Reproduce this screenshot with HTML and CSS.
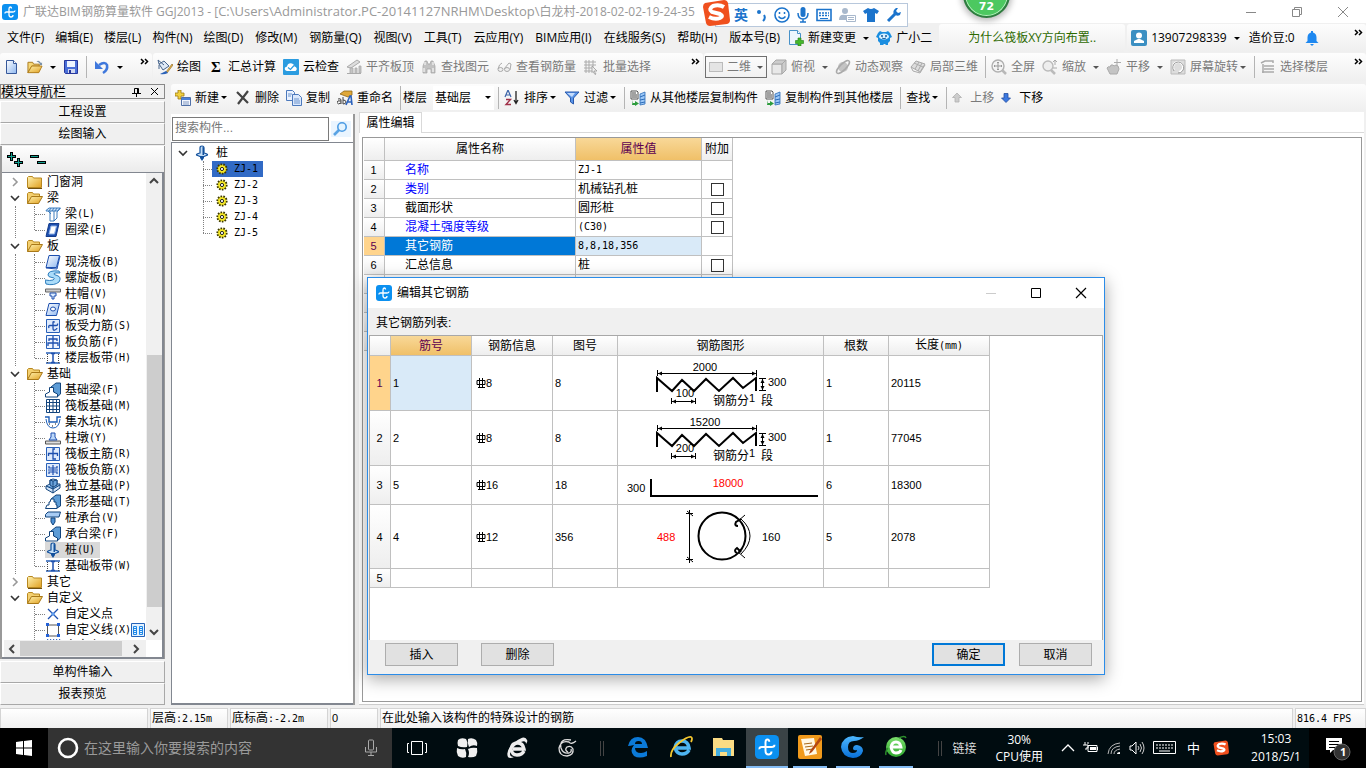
FILE: index.html
```html
<!DOCTYPE html>
<html lang="zh-CN">
<head>
<meta charset="utf-8">
<title>广联达BIM钢筋算量软件 GGJ2013</title>
<link rel="stylesheet" href="styles.css">
</head>
<body>
<svg class="defs" aria-hidden="true">
  <defs>
    <linearGradient id="gold" x1="0" y1="0" x2="1" y2="1"><stop offset="0" stop-color="#fff2b0"/><stop offset="1" stop-color="#e0a020"/></linearGradient>
    <linearGradient id="blue" x1="0" y1="0" x2="1" y2="1"><stop offset="0" stop-color="#fff"/><stop offset="1" stop-color="#8fb8f0"/></linearGradient>
    <linearGradient id="deep" x1="0" y1="0" x2="0" y2="1"><stop offset="0" stop-color="#4db8ff"/><stop offset="1" stop-color="#0870d8"/></linearGradient>
    <linearGradient id="green" x1="0" y1="0" x2="0" y2="1"><stop offset="0" stop-color="#7be06c"/><stop offset="1" stop-color="#2fa82f"/></linearGradient>
  </defs>
  <symbol id="i-app" viewBox="0 0 16 16"><rect width="16" height="16" rx="3" fill="#0b90f0"/><path d="M9.500 4.500Q9.500 3 8.300 3 7 3 7 5v5.500Q7 13 9 13t2-2M3 9.500Q2.800 8 4.500 8h6.500Q13 8 13 6.500" fill="none" stroke="#fff" stroke-width="1.300"/></symbol>
  <symbol id="i-new" viewBox="0 0 16 16"><path d="M2.500 1.500h7l3 3v10h-10z" fill="url(#blue)" stroke="#36589a"/><path d="M9.500 1.500v3h3" fill="#fff" stroke="#36589a"/></symbol>
  <symbol id="i-open" viewBox="0 0 17 16"><path d="M1 14V3h5l1 2h6v2H5z" fill="#f6d878" stroke="#a8781c"/><path d="M1 14 5 7h11l-3.500 7z" fill="url(#gold)" stroke="#b07c18"/><path d="M10 2q3-2 5 2l1-1v3h-3l1-1q-1-2-4-3" fill="#7890a8"/></symbol>
  <symbol id="i-save" viewBox="0 0 16 16"><path d="M1.500 1.500h13v13h-12l-1-1z" fill="#4a6fd8" stroke="#27379c"/><path d="M4 2h8v6H4z" fill="#eef4ff"/><path d="M5 10h7v4H5z" fill="#d0d8f0"/><path d="M6 11h2v3H6z" fill="#27379c"/></symbol>
  <symbol id="i-undo" viewBox="0 0 16 16"><path d="M5 6q6-4 8 0 1 5-4 8" fill="none" stroke="#3f78dc" stroke-width="2.600"/><path d="M1 2v8h8z" fill="#3f78dc"/></symbol>
  <symbol id="i-paint" viewBox="0 0 16 16"><path d="m2 5 5-3 5 5-6 4z" fill="#dfe9f6" stroke="#46648c"/><path d="M2 5 1 1l6 5M2 6v4" fill="none" stroke="#46648c"/><path d="m15 5-6 8 1 1 6-8z" fill="#efb844" stroke="#7c5c20" stroke-width=".6"/><path d="m9 12-6 3q4 1 8-1z" fill="#2b62b8"/></symbol>
  <symbol id="i-cloud" viewBox="0 0 16 16"><rect width="16" height="16" rx="1" fill="#2b9ce0"/><path d="M4 12q-3-1-2-3.500l2-1q1-4 5-3 2 .5 2.500 3 3 1 2 3.500l-1 1z" fill="#fff"/><path d="m5 8.500 2.500 2 3.500-4" fill="none" stroke="#2b9ce0" stroke-width="1.200"/></symbol>
  <symbol id="i-slab" viewBox="0 0 16 16"><path d="m1 8 10-7 3 2-9 6z" fill="#ddd" stroke="#aaa"/><path d="M4 14V9h3v5m2 0V9h2v5m2 0V7h2v7z" fill="#c4c4c4" stroke="#aaa" stroke-width=".8"/><path d="M1 14.500h14" stroke="#aaa"/></symbol>
  <symbol id="i-bino" viewBox="0 0 16 16"><path d="M2 7 4 2h2l1 3h2l1-3h2l2 5v7h-4v-4H6v4H2z" fill="#c2c2c2" stroke="#a0a0a0" stroke-width=".7"/><path d="M4 3v3m8-3v3M3 9v4m9-4v4" stroke="#fff"/></symbol>
  <symbol id="i-glasses" viewBox="0 0 16 16"><path d="M2 10q1-5 4-6M8 10l5-6 2 1-1 6" fill="none" stroke="#aaa"/><ellipse cx="4.500" cy="10.500" rx="2.500" ry="2" fill="#eee" stroke="#aaa"/><ellipse cx="11" cy="10.500" rx="2.500" ry="2" fill="#eee" stroke="#aaa"/></symbol>
  <symbol id="i-batch" viewBox="0 0 16 16"><path d="M1 3h12M1 6h12M1 9h8M1 12h8M3 1v13M6 1v13M10 1v7" stroke="#ababab" fill="none"/><path d="m9 7 5 5h-3l2 3-1 .5-2-3-1 1z" fill="#eee" stroke="#999" stroke-width=".8"/></symbol>
  <symbol id="i-box" viewBox="0 0 16 16"><path d="M1 5h10v10H1z" fill="#e8e8e8" stroke="#a8a8a8"/><path d="m1 5 4-4h10l-4 4zM11 5l4-4v10l-4 4z" fill="#ccc" stroke="#a8a8a8"/></symbol>
  <symbol id="i-orbit" viewBox="0 0 16 16"><circle cx="8" cy="8" r="5" fill="#c4c4c4"/><ellipse cx="8" cy="8" rx="8.500" ry="3" transform="rotate(-45 8 8)" fill="none" stroke="#aaa" stroke-width="1.500"/></symbol>
  <symbol id="i-part" viewBox="0 0 16 16"><path d="m1 8 5-6 9 3-5 8z" fill="#ddd" stroke="#aaa"/><path d="m1 8 2 4 7 2 5-8M4 4l9 4M9 3 5 10M12 4 8 12" fill="none" stroke="#aaa"/></symbol>
  <symbol id="i-full" viewBox="0 0 16 16"><circle cx="7" cy="7" r="6" fill="#f4f4f4" stroke="#b0b0b0" stroke-width="1.400"/><path d="M7 3v8M3 7h8M6 4l1-1 1 1M6 10l1 1 1-1M4 6 3 7l1 1m6-2 1 1-1 1" fill="none" stroke="#999"/><path d="m11 11 4 4" stroke="#b8b8b8" stroke-width="2.500"/></symbol>
  <symbol id="i-zoom" viewBox="0 0 16 16"><circle cx="6" cy="7" r="5" fill="#eee" stroke="#bbb" stroke-width="1.400"/><path d="m9 11 4 4" stroke="#bbb" stroke-width="2.500"/><path d="M13 1v5m-2-3 2-2 2 2M11 9h4" fill="none" stroke="#aaa"/></symbol>
  <symbol id="i-pan" viewBox="0 0 16 16"><path d="M1 9q1-2 3-1l1-2h2l1 1 2-1 2 1 1 3-2 5H4z" fill="#c4c4c4" stroke="#aaa"/><path d="M11 0v7M8 3.500h7" stroke="#aaa"/></symbol>
  <symbol id="i-rotate" viewBox="0 0 16 16"><path d="M1 1h14v14H1z" fill="#ddd" stroke="#bbb"/><path d="M4 11a5 5 0 1 1 5 2" fill="none" stroke="#fff" stroke-width="2"/><path d="M4 12a5.500 5.500 0 1 1 4 2" fill="none" stroke="#999"/></symbol>
  <symbol id="i-layers" viewBox="0 0 16 16"><path d="m1 4 4-2h8v2M4 7h10M4 10h10M2 13h12M3 5v9" stroke="#aaa" stroke-width="1.500" fill="none"/></symbol>
  <symbol id="i-change" viewBox="0 0 16 16"><path d="M1.500.5h8l3 3v11h-11z" fill="#eef6fd" stroke="#4791c8"/><path d="M9.500.5v3h3" fill="#fff" stroke="#4791c8"/><path d="M10 8h3v2.500h2.500v3H13V16h-3v-2.500H7.500v-3H10z" fill="#44b82a" stroke="#257d16" stroke-width=".6"/></symbol>
  <symbol id="i-robot" viewBox="0 0 16 16"><path d="m0 7 2-4 2-2 2 1h4l2-1 2 2 2 4-2 1v3l-2 2v2h-2l-1-1H8l-1 1H4v-2l-2-2V8z" fill="#1b8ee0"/><ellipse cx="8" cy="6.500" rx="5" ry="3" fill="#d8f0ff"/><circle cx="6" cy="6" r="1" fill="#155c9c"/><circle cx="10" cy="6" r="1" fill="#155c9c"/><path d="M6 8q2 1.500 4 0" stroke="#155c9c" fill="none"/></symbol>
  <symbol id="i-user" viewBox="0 0 16 16"><rect width="16" height="16" rx="2" fill="#3b8fc2"/><circle cx="8" cy="5.500" r="3" fill="#fff"/><path d="M3 13v-2l4-2h2l4 2v2z" fill="#fff"/></symbol>
  <symbol id="i-bell" viewBox="0 0 16 16"><path d="M7 1h2v1.500q3.500 1 3.500 5V11l2 2h-13l2-2V7.500q0-4 3.500-5z" fill="#1e88f0"/><path d="M6 14h4l-2 2z" fill="#1e88f0"/></symbol>
  <symbol id="i-add" viewBox="0 0 16 16"><path d="M3 0h3v3h3v3H6v3H3V6H0V3h3z" fill="#f0d040" stroke="#9c7a10" stroke-width=".8"/><path d="M6.500 7.500h9v8h-9z" fill="#f2f6ff" stroke="#5070a8"/><path d="M7 8h8v2H7z" fill="#4a80d8"/><path d="M8 12h6M8 14h6" stroke="#8098c0"/></symbol>
  <symbol id="i-del" viewBox="0 0 16 16"><path d="m2 2 11 11m0-12L3 14" stroke="#444" stroke-width="2.200"/></symbol>
  <symbol id="i-copy" viewBox="0 0 16 16"><path d="M.5.500h6l2 2v8h-8z" fill="#eaf2ff" stroke="#4c79bc"/><path d="M6.500 4.500h6l3 3v8h-9z" fill="#dbe8fc" stroke="#4c79bc"/><path d="M2 4h4M2 6h3m3 3h5m-5 2h6m-6 2h6" stroke="#6c94cc"/></symbol>
  <symbol id="i-rename" viewBox="0 0 16 16"><path d="m3 4 4-3h8v4l-4 2z" fill="#e0a838" stroke="#8c6418" stroke-width=".8"/><path d="M1 9q3-1 3 1v4M4 11q-4-1-4 1.500Q1 15 4 13M6 7v7q3 0 3-2t-3-2" fill="none" stroke="#444"/><path d="m9 15 4-9h1l1 9m-5-3h5" fill="none" stroke="#2c62bc" stroke-width="1.600"/></symbol>
  <symbol id="i-sort" viewBox="0 0 16 16"><path d="M1 7 4 0l3 7M2 5h4" fill="none" stroke="#3c64a8" stroke-width="1.200"/><path d="M2 9.500h4.500L2 14.500h5" fill="none" stroke="#a03048" stroke-width="1.400"/><path d="M12 1v12m-2-3 2 3.500 2-3.500" fill="none" stroke="#222" stroke-width="1.300"/></symbol>
  <symbol id="i-filter" viewBox="0 0 16 16"><path d="M1 2h14L9.500 8v6l-3-2V8z" fill="#5a94e8" stroke="#2859ac"/><path d="M3 3h8L8 7z" fill="#c4dcfc"/></symbol>
  <symbol id="i-floor" viewBox="0 0 16 16"><path d="M1 1h6l1 1v7H1z" fill="#fff" stroke="#555"/><path d="M2 3h4M2 5h5M2 7h5" stroke="#444"/><path d="m10 4 5-2v12l-5 1z" fill="#9cc8f8" stroke="#2c6cb8" stroke-width=".8"/><path d="m10 7 5-2m-5 5 5-1m-5 4 5-1" stroke="#2c6cb8"/><path d="M3 10v3h2v-2l4 2.500L5 16v-1H2z" fill="#2c9c3c"/></symbol>
  <symbol id="i-up" viewBox="0 0 10 16"><path d="m5 3 4.500 4.500H7V12H3V7.500H.5z" fill="#ccc" stroke="#b0b0b0" stroke-width=".8"/></symbol>
  <symbol id="i-down" viewBox="0 0 10 16"><path d="M5 12.500.5 8H3V3.500h4V8h2.500z" fill="#3b78e0" stroke="#234ca0" stroke-width=".8"/></symbol>
  <symbol id="i-more" viewBox="0 0 9 8"><path d="m1 1 2.500 2.500L1 6m4-5 2.500 2.500L5 6" fill="none" stroke="#000" stroke-width="1.500"/></symbol>
  <symbol id="i-right" viewBox="0 0 12 12"><path d="m4 2 4 4-4 4" fill="none" stroke="#999" stroke-width="1.600"/></symbol>
  <symbol id="i-exp" viewBox="0 0 12 12"><path d="m2 4 4 4 4-4" fill="none" stroke="#333" stroke-width="1.600"/></symbol>
  <symbol id="f-shut" viewBox="0 0 17 16"><path d="M1.500 13.500v-10l1-1h4l1 1.500h8v9.500z" fill="url(#gold)" stroke="#b88820"/><path d="M2 14.500h14" stroke="#705010"/></symbol>
  <symbol id="f-open" viewBox="0 0 17 16"><path d="M1.500 13.500v-10l1-1h4l1 1.500h6v2.500" fill="#f4d070" stroke="#b88820"/><path d="m1.500 13.500 4-7h11l-4 7z" fill="url(#gold)" stroke="#a87818"/></symbol>
  <symbol id="t-beam" viewBox="0 0 16 16"><path d="M1 4.500 4 2h11.500L13 5H1z" fill="#cfe4fa" stroke="#3c7cbc"/><path d="M5 5v10h4V5M9 15l3-3V6l3-4M3 5l3 3M6 2l-2 3m5-3L7 5m5-3-2 3" fill="none" stroke="#3c7cbc"/></symbol>
  <symbol id="t-ring" viewBox="0 0 16 16"><path d="M4 1.500h10l-3 13H1z" fill="#1d4fae" stroke="#143c8c"/><path d="M6 4h5.500l-2 8H4z" fill="#fff" stroke="#8cb0e8"/></symbol>
  <symbol id="t-slab" viewBox="0 0 16 16"><path d="M4 1.500h10.500l-3 12H1z" fill="url(#blue)" stroke="#1d4fae"/><path d="m1 14 11 1 3-13" stroke="#1d4fae" fill="none"/></symbol>
  <symbol id="t-spiral" viewBox="0 0 16 16"><path d="M14 1Q3 0 3 5q0 2 4 2.500 4 .5 1 2.500-3 1-8 0l1 4q8 2 13-2 3-5-2-6.500-4-1-3-2 1-1 6-.5z" fill="#aadcfa" stroke="#2c7cbc"/></symbol>
  <symbol id="t-cap" viewBox="0 0 16 16"><path d="M.5 3h15v3H.5z" fill="#ccc" stroke="#666"/><path d="M5 7h6v3H9v3H7v-3H5z" fill="#dcecff" stroke="#1d4fae"/></symbol>
  <symbol id="t-hole" viewBox="0 0 16 16"><path d="M4 1.500h10.500l-3 12H1z" fill="url(#blue)" stroke="#1d4fae"/><ellipse cx="8" cy="7" rx="2.500" ry="2" fill="#fff" stroke="#1d4fae"/></symbol>
  <symbol id="t-force" viewBox="0 0 16 16"><path d="M1.500 1.500h13v13h-13z" fill="#dfebfc" stroke="#2860b8"/><path d="M9.500 4.500Q9 3 8 4v6q0 3 2 2t2-2M4 10q-1-2.500 1-2.500h6q2 0 1.500-2" fill="none" stroke="#1d4fae" stroke-width="1.300"/></symbol>
  <symbol id="t-neg" viewBox="0 0 16 16"><path d="M1.500 1.500h13v13h-13z" fill="#eef4fe" stroke="#2860b8"/><path d="M8 2v12M4 7V5h8v2M3 12v-3h10v3" fill="none" stroke="#1d4fae" stroke-width="1.300"/></symbol>
  <symbol id="t-negx" viewBox="0 0 16 16"><path d="M1.500 1.500h13v13h-13z" fill="#dfebfc" stroke="#2860b8"/><path d="M8 3v10M4 4v2h8V4M4 12v-2h8v2M3 8h10" fill="none" stroke="#1d4fae" stroke-width="1.200"/></symbol>
  <symbol id="t-band" viewBox="0 0 16 16"><path d="M1 3h14M1 13h14" stroke="#2860b8" stroke-width="1.500"/><path d="M8 3v10M6 3.500h4M6 12.500h4" stroke="#1d4fae" stroke-width="1.500"/><path d="M2.500 4v9m11-9v9" stroke="#444" stroke-dasharray="1 1"/></symbol>
  <symbol id="t-fbeam" viewBox="0 0 16 16"><path d="m6 5 5-4h4.500v11L12 15z" fill="#5d9cd6" stroke="#12447c"/><path d="M.5 15v-3l4-2V5.500h4V10l4 2v3z" fill="#fff" stroke="#12447c"/></symbol>
  <symbol id="t-raft" viewBox="0 0 16 16"><path d="M1.500 1.500h13v13h-13zM4.500 4.500h7v7h-7zM1 4.500h14M1 11.500h14M4.500 1v14M11.500 1v14M8 1v14M1 8h14" fill="none" stroke="#12447c"/></symbol>
  <symbol id="t-pit" viewBox="0 0 16 16"><path d="M0 3h4v5h8V3h4" fill="none" stroke="#1e5fb8" stroke-width="1.400"/><path d="M1 5q1 9 7 9t7-9" fill="none" stroke="#1e5fb8"/><path d="M4 10h1m2 2h1m2-2h1" stroke="#111"/></symbol>
  <symbol id="t-pier" viewBox="0 0 16 16"><path d="M.5 11h15v3H.5z" fill="#ddd" stroke="#555"/><path d="M6 3h4v4l2 3H4l2-3z" fill="#bcd8fa" stroke="#1d4fae"/></symbol>
  <symbol id="t-main" viewBox="0 0 16 16"><path d="M1.500 1.500h13v13h-13z" fill="#dfebfc" stroke="#2860b8"/><path d="M10 3H8v10h3M3.500 10V7.500h9V10" fill="none" stroke="#1d4fae" stroke-width="1.300"/></symbol>
  <symbol id="t-solo" viewBox="0 0 16 16"><path d="m1 8 4-2V2l3-1 4 1v4l3 0v4l-7 5-7-4z" fill="#cfe2f8" stroke="#12447c"/><path d="M5 7V2l3 1 4-1v5L8 9zM1 8l7 3 7-4M8 3v12" fill="#6ca4dc" stroke="#12447c"/></symbol>
  <symbol id="t-strip" viewBox="0 0 16 16"><path d="m6 5 5-4h4.500v11L12 14z" fill="#5d9cd6" stroke="#12447c"/><path d="M.5 14.500 2 11h2V8h1l1-3h3v3h2v3h1v3.500z" fill="#fff" stroke="#12447c"/></symbol>
  <symbol id="t-pcap" viewBox="0 0 16 16"><path d="M.5 4.500 3 2h12.500L14 7H.5z" fill="#a8ccf4" stroke="#12447c"/><path d="M6 8h4v4l-2 3-2-3z" fill="#4d90d4" stroke="#12447c"/></symbol>
  <symbol id="t-pile" viewBox="0 0 16 16"><path d="M6 3q0-2 2-2t2 2v5q4 1 3.500 2L10 11.500H6L2.500 10Q2 9 6 8z" fill="#c4def6" stroke="#12509c" stroke-width="1.200"/><path d="M6 11h4v2l-2 3-2-3zM8.500 2q1.500 0 1.500 1v7H8.500z" fill="#12509c"/></symbol>
  <symbol id="t-point" viewBox="0 0 16 16"><path d="m3 3 10 10M13 3 3 13" stroke="#1d4fae" stroke-width="1.300"/><path d="M6.500 6.500h3v3h-3z" fill="#5c9cf0"/></symbol>
  <symbol id="t-line" viewBox="0 0 16 16"><path d="M2.500 3h11v11h-11z" fill="none" stroke="#555"/><path d="M1 1h3v3H1zm11 0h3v3h-3zM1 12h3v3H1zm11 0h3v3h-3z" fill="#2462d8"/></symbol>
  <symbol id="t-face" viewBox="0 0 16 16"><path d="m1 4 2-3m1 3 2-3m1 3 2-3m1 3 2-3m1 3 2-3" stroke="#1d4fae"/></symbol>
  <symbol id="t-gear" viewBox="0 0 12 12"><circle cx="6" cy="6" r="4.600" fill="#f0e020" stroke="#3c3800" stroke-width="2" stroke-dasharray="1.600 1.200"/><circle cx="6" cy="6" r="3.600" fill="#f4e828"/><circle cx="6" cy="6" r="1.600" fill="#fff" stroke="#222"/></symbol>
  <symbol id="i-find" viewBox="0 0 16 16"><path d="m1 14 5-5" stroke="#5aa4e4" stroke-width="2.600"/><circle cx="9" cy="6" r="4.200" fill="#e4f4ff" stroke="#4c9ce4" stroke-width="1.600"/></symbol>
  <symbol id="i-sogou" viewBox="0 0 28 28"><path d="m3 4 19-3q3 0 4 3l2 17q0 3-3 4L8 27q-3 0-4-3L1 8q0-3 2-4z" fill="#f0501e"/><path d="M22 8Q17 5 11 7q-5 3-1 6l8 2q4 2 0 4-5 2-11-1" fill="none" stroke="#fff" stroke-width="4"/></symbol>
  <symbol id="i-rebar" viewBox="0 0 10 12"><path d="M1 3.500h8v4H1zM3.500 1v9M6.500 1v9M2 10.500h7" fill="none" stroke="#000"/></symbol>
</svg>

<header class="titlebar">
  <svg class="ic"><use href="#i-app"/></svg>
  <h1 class="title">广联达BIM钢筋算量软件 GGJ2013 - [<span class="path">C:\Users\Administrator.PC-20141127NRHM\Desktop\</span>白龙村-2018-02-02-19-24-35</h1>
  <div class="winbtns">
    <button aria-label="最小化"><svg width="12" height="12"><path d="M1 6.500h10" stroke="#888"/></svg></button>
    <button aria-label="还原"><svg width="12" height="12"><path d="M1.500 3.500h7v7h-7zM3.500 3V1.500h7v7H9" fill="none" stroke="#888"/></svg></button>
    <button aria-label="关闭"><svg width="12" height="12"><path d="m1 1 10 10M11 1 1 11" stroke="#888"/></svg></button>
  </div>
</header>

<div class="menurow">
  <nav class="menu">
    <button>文件(F)</button><button>编辑(E)</button><button>楼层(L)</button><button>构件(N)</button><button>绘图(D)</button><button>修改(M)</button><button>钢筋量(Q)</button><button>视图(V)</button><button>工具(T)</button><button>云应用(Y)</button><button>BIM应用(I)</button><button>在线服务(S)</button><button>帮助(H)</button><button>版本号(B)</button>
  </nav>
  <div class="tools extra">
    <button class="tb"><svg class="ic"><use href="#i-change"/></svg>新建变更<i class="caret"></i></button>
    <button class="tb"><svg class="ic"><use href="#i-robot"/></svg>广小二</button>
  </div>
  <div class="strip tip"><a href="#">为什么筏板XY方向布置..</a></div>
  <div class="strip account">
    <button class="tb"><svg class="ic"><use href="#i-user"/></svg>13907298339<i class="caret"></i></button>
    <span>造价豆:0</span>
    <button class="tb" aria-label="通知"><svg class="ic"><use href="#i-bell"/></svg></button>
    <svg class="more"><use href="#i-more"/></svg>
  </div>
</div>

<div class="toolrow">
  <div class="strip file">
    <button class="tb" aria-label="新建"><svg class="ic"><use href="#i-new"/></svg></button>
    <button class="tb" aria-label="打开"><svg class="ic"><use href="#i-open"/></svg><i class="caret"></i></button>
    <button class="tb" aria-label="保存"><svg class="ic"><use href="#i-save"/></svg></button>
    <i class="sep"></i>
    <button class="tb" aria-label="撤销"><svg class="ic"><use href="#i-undo"/></svg><i class="caret"></i></button>
    <svg class="more"><use href="#i-more"/></svg>
  </div>
  <div class="strip draw">
    <button class="tb"><svg class="ic"><use href="#i-paint"/></svg>绘图</button>
    <button class="tb"><b class="sigma">Σ</b>汇总计算</button>
    <button class="tb"><svg class="ic"><use href="#i-cloud"/></svg>云检查</button>
    <button class="tb off"><svg class="ic"><use href="#i-slab"/></svg>平齐板顶</button>
    <button class="tb off"><svg class="ic"><use href="#i-bino"/></svg>查找图元</button>
    <button class="tb off"><svg class="ic"><use href="#i-glasses"/></svg>查看钢筋量</button>
    <button class="tb off"><svg class="ic"><use href="#i-batch"/></svg>批量选择</button>
    <svg class="more"><use href="#i-more"/></svg>
  </div>
  <div class="strip view">
    <label class="combo off"><i class="swatch"></i><select aria-label="视图维度"><option>二维</option></select><i class="caret"></i></label>
    <button class="tb off"><svg class="ic"><use href="#i-box"/></svg>俯视<i class="caret"></i></button>
    <button class="tb off"><svg class="ic"><use href="#i-orbit"/></svg>动态观察</button>
    <button class="tb off"><svg class="ic"><use href="#i-part"/></svg>局部三维</button>
    <i class="sep"></i>
    <button class="tb off"><svg class="ic"><use href="#i-full"/></svg>全屏</button>
    <button class="tb off"><svg class="ic"><use href="#i-zoom"/></svg>缩放<i class="caret"></i></button>
    <button class="tb off"><svg class="ic"><use href="#i-pan"/></svg>平移<i class="caret"></i></button>
    <button class="tb off tight"><svg class="ic"><use href="#i-rotate"/></svg>屏幕旋转<i class="caret"></i></button>
    <i class="sep"></i>
    <button class="tb off"><svg class="ic"><use href="#i-layers"/></svg>选择楼层</button>
    <svg class="more"><use href="#i-more"/></svg>
  </div>
</div>

<main class="work">
  <aside class="nav">
    <div class="navhead"><h2>模块导航栏</h2>
      <button aria-label="固定"><svg width="9" height="10"><path d="M2.500 6V1.500h4V6M5.500 1v5M0 6.500h9M4.500 7v3" fill="none" stroke="#000"/></svg></button>
      <button aria-label="关闭"><svg width="9" height="9"><path d="m1 1 7 7M8 1 1 8" stroke="#000"/></svg></button>
    </div>
    <button class="navbtn">工程设置</button>
    <button class="navbtn">绘图输入</button>
    <div class="treebox">
      <div class="treetools">
        <button aria-label="全部展开"><svg width="16" height="16"><path d="M4.500 0v9M0 4.500h9M11.500 6v9M7 10.500h9" stroke="#000" stroke-width="3"/><path d="M4.500 1v7M1 4.500h7M11.500 7v7M8 10.500h7" stroke="#12a090"/></svg></button>
        <button aria-label="全部折叠"><svg width="16" height="16"><path d="M0 4.500h9M7 10.500h9" stroke="#000" stroke-width="3"/><path d="M1 4.500h7M8 10.500h7" stroke="#12a090"/></svg></button>
      </div>
      <div class="treeview">
        <div class="treepane">
          <ul class="tree">
            <li><div class="root"><svg class="arw"><use href="#i-right"/></svg><svg class="fold"><use href="#f-shut"/></svg>门窗洞</div></li>
            <li><div class="root"><svg class="arw"><use href="#i-exp"/></svg><svg class="fold"><use href="#f-open"/></svg>梁</div>
              <ul>
                <li><svg class="ic"><use href="#t-beam"/></svg>梁<kbd>(L)</kbd></li>
                <li><svg class="ic"><use href="#t-ring"/></svg>圈梁<kbd>(E)</kbd></li>
              </ul></li>
            <li><div class="root"><svg class="arw"><use href="#i-exp"/></svg><svg class="fold"><use href="#f-open"/></svg>板</div>
              <ul>
                <li><svg class="ic"><use href="#t-slab"/></svg>现浇板<kbd>(B)</kbd></li>
                <li><svg class="ic"><use href="#t-spiral"/></svg>螺旋板<kbd>(B)</kbd></li>
                <li><svg class="ic"><use href="#t-cap"/></svg>柱帽<kbd>(V)</kbd></li>
                <li><svg class="ic"><use href="#t-hole"/></svg>板洞<kbd>(N)</kbd></li>
                <li><svg class="ic"><use href="#t-force"/></svg>板受力筋<kbd>(S)</kbd></li>
                <li><svg class="ic"><use href="#t-neg"/></svg>板负筋<kbd>(F)</kbd></li>
                <li><svg class="ic"><use href="#t-band"/></svg>楼层板带<kbd>(H)</kbd></li>
              </ul></li>
            <li><div class="root"><svg class="arw"><use href="#i-exp"/></svg><svg class="fold"><use href="#f-open"/></svg>基础</div>
              <ul>
                <li><svg class="ic"><use href="#t-fbeam"/></svg>基础梁<kbd>(F)</kbd></li>
                <li><svg class="ic"><use href="#t-raft"/></svg>筏板基础<kbd>(M)</kbd></li>
                <li><svg class="ic"><use href="#t-pit"/></svg>集水坑<kbd>(K)</kbd></li>
                <li><svg class="ic"><use href="#t-pier"/></svg>柱墩<kbd>(Y)</kbd></li>
                <li><svg class="ic"><use href="#t-main"/></svg>筏板主筋<kbd>(R)</kbd></li>
                <li><svg class="ic"><use href="#t-negx"/></svg>筏板负筋<kbd>(X)</kbd></li>
                <li><svg class="ic"><use href="#t-solo"/></svg>独立基础<kbd>(P)</kbd></li>
                <li><svg class="ic"><use href="#t-strip"/></svg>条形基础<kbd>(T)</kbd></li>
                <li><svg class="ic"><use href="#t-pcap"/></svg>桩承台<kbd>(V)</kbd></li>
                <li><svg class="ic"><use href="#t-fbeam"/></svg>承台梁<kbd>(F)</kbd></li>
                <li><span class="current"><svg class="ic"><use href="#t-pile"/></svg>桩<kbd>(U)</kbd></span></li>
                <li><svg class="ic"><use href="#t-band"/></svg>基础板带<kbd>(W)</kbd></li>
              </ul></li>
            <li><div class="root"><svg class="arw"><use href="#i-right"/></svg><svg class="fold"><use href="#f-shut"/></svg>其它</div></li>
            <li class="end"><div class="root"><svg class="arw"><use href="#i-exp"/></svg><svg class="fold"><use href="#f-open"/></svg>自定义</div>
              <ul>
                <li><svg class="ic"><use href="#t-point"/></svg>自定义点</li>
                <li><svg class="ic"><use href="#t-line"/></svg>自定义线<kbd>(X)</kbd><svg class="dock" viewBox="0 0 14 14"><path d="M.5.500h13v13H.5z" fill="#e4f2ff" stroke="#2462b8"/><path d="M2.500 3.500h3v8h-3zm6 0h3v8h-3zM3 5.500h2M3 7.500h2M3 9.500h2M9 5.500h2M9 7.500h2M9 9.500h2" fill="none" stroke="#1e88e8"/></svg></li>
                <li><svg class="ic"><use href="#t-face"/></svg>自定义面</li>
              </ul></li>
          </ul>
        </div>
        <div class="vbar"><svg width="10" height="16"><path d="m1 10 4-4 4 4" fill="none" stroke="#444" stroke-width="2"/></svg><i class="thumb"></i><svg width="10" height="16"><path d="m1 6 4 4 4-4" fill="none" stroke="#444" stroke-width="2"/></svg></div>
        <div class="hbar"><svg width="16" height="10"><path d="M10 1 6 5l4 4" fill="none" stroke="#444" stroke-width="2"/></svg><i class="thumb"></i><svg width="16" height="10"><path d="m6 1 4 4-4 4" fill="none" stroke="#444" stroke-width="2"/></svg></div>
      </div>
    </div>
    <button class="navbtn">单构件输入</button>
    <button class="navbtn">报表预览</button>
  </aside>

  <section class="stage">
    <div class="strip edit">
      <button class="tb tight"><svg class="ic"><use href="#i-add"/></svg>新建<i class="caret"></i></button>
      <button class="tb"><svg class="ic"><use href="#i-del"/></svg>删除</button>
      <button class="tb"><svg class="ic"><use href="#i-copy"/></svg>复制</button>
      <button class="tb"><svg class="ic"><use href="#i-rename"/></svg>重命名</button>
      <label class="floor">楼层<span class="drop"><select><option>基础层</option></select><i class="caret"></i></span></label>
      <i class="sep"></i>
      <button class="tb tight"><svg class="ic"><use href="#i-sort"/></svg>排序<i class="caret"></i></button>
      <button class="tb tight"><svg class="ic"><use href="#i-filter"/></svg>过滤<i class="caret"></i></button>
      <i class="sep"></i>
      <button class="tb"><svg class="ic"><use href="#i-floor"/></svg>从其他楼层复制构件</button>
      <button class="tb"><svg class="ic"><use href="#i-floor"/></svg>复制构件到其他楼层</button>
      <i class="sep"></i>
      <button class="tb tight">查找<i class="caret"></i></button>
      <i class="sep"></i>
      <button class="tb off wide"><svg class="slim"><use href="#i-up"/></svg>上移</button>
      <button class="tb wide"><svg class="slim"><use href="#i-down"/></svg>下移</button>
    </div>
    <div class="panes">
      <section class="parts">
        <div class="search"><input type="text" aria-label="搜索构件" placeholder="搜索构件..."><button aria-label="搜索"><svg class="ic"><use href="#i-find"/></svg></button></div>
        <div class="partlist">
          <div class="partroot"><svg class="arw"><use href="#i-exp"/></svg><svg class="ic"><use href="#t-pile"/></svg>桩</div>
          <ul>
            <li><a href="#" class="picked"><svg><use href="#t-gear"/></svg>ZJ-1</a></li>
            <li><a href="#"><svg><use href="#t-gear"/></svg>ZJ-2</a></li>
            <li><a href="#"><svg><use href="#t-gear"/></svg>ZJ-3</a></li>
            <li><a href="#"><svg><use href="#t-gear"/></svg>ZJ-4</a></li>
            <li><a href="#"><svg><use href="#t-gear"/></svg>ZJ-5</a></li>
          </ul>
        </div>
      </section>
      <section class="props">
        <div class="tabs"><button class="tab">属性编辑</button></div>
        <div class="sheet">
          <table class="grid attrs">
            <colgroup><col class="c-no"><col class="c-name"><col class="c-val"><col class="c-add"></colgroup>
            <thead><tr><th></th><th>属性名称</th><th class="hot">属性值</th><th>附加</th></tr></thead>
            <tbody>
              <tr><th>1</th><td class="link">名称</td><td class="mono">ZJ-1</td><td></td></tr>
              <tr><th>2</th><td class="link">类别</td><td>机械钻孔桩</td><td class="chk"><input type="checkbox" aria-label="类别附加"></td></tr>
              <tr><th>3</th><td>截面形状</td><td>圆形桩</td><td class="chk"><input type="checkbox" aria-label="截面形状附加"></td></tr>
              <tr><th>4</th><td class="link">混凝土强度等级</td><td class="mono">(C30)</td><td class="chk"><input type="checkbox" aria-label="混凝土强度等级附加"></td></tr>
              <tr class="on"><th>5</th><td>其它钢筋</td><td class="mono">8,8,18,356</td><td></td></tr>
              <tr><th>6</th><td>汇总信息</td><td>桩</td><td class="chk"><input type="checkbox" aria-label="汇总信息附加"></td></tr>
              <tr><th></th><td></td><td></td><td></td></tr>
              <tr><th></th><td></td><td></td><td></td></tr>
              <tr><th></th><td></td><td></td><td></td></tr>
              <tr><th></th><td></td><td></td><td></td></tr>
            </tbody>
          </table>
        </div>
      </section>
    </div>
  </section>
</main>

<footer class="status"><span class="s1"></span><span class="s2">层高<kbd>:2.15m</kbd></span><span class="s3">底标高<kbd>:-2.2m</kbd></span><span class="s4">0</span><span class="s5">在此处输入该构件的特殊设计的钢筋</span><span class="s6"><kbd>816.4 FPS</kbd></span></footer>

<div class="taskbar">
  <button class="start" aria-label="开始"><svg width="16" height="16"><path d="m0 2 7-1v6.500H0zM8 1l8-1v7.500H8zM0 8.500h7V15l-7-1zM8 8.500h8V16l-8-1z" fill="#fff"/></svg></button>
  <label class="cortana"><svg width="22" height="22"><circle cx="11" cy="11" r="9" fill="none" stroke="#fff" stroke-width="2.600"/></svg><input type="text" aria-label="搜索" placeholder="在这里输入你要搜索的内容"><svg width="12" height="18"><rect x="3.500" y="1" width="5" height="10" rx="1" fill="none" stroke="#aaa"/><path d="M.5 8v5h11V8M6 13v3M3 16.500h6" fill="none" stroke="#aaa"/></svg></label>
  <div class="quick">
    <button aria-label="任务视图"><svg width="22" height="16"><path d="M5.500 1.500h11v13h-11zM3 3.500H1.500v9H3m16-9h1.500v9H19" fill="none" stroke="#fff"/></svg></button>
    <button aria-label="四叶草"><svg width="22" height="22"><path d="M2 3q3-3 8-1 2 3 1 8-5 1-9-1-1-3 0-6zM12 2q4-2 8 1 2 3 1 6-4-2-8 1-2-4-1-8zM1 11q4 2 8 1 2 4 1 8-4 2-8-1-2-4-1-8zM12 12q4-2 9-1 1 4-1 8-3 2-8 1 2-4 0-8z" fill="#f0f0f0"/></svg></button>
    <button aria-label="浏览器"><svg width="22" height="22"><path d="M18 14q-2 4-7 4t-6-6q1-6 6.500-6t6.500 6H7" fill="none" stroke="#eee" stroke-width="3.400"/><path d="M2 20Q-1 13 9 5t12-2q1 1-1 4 0-4-5-2Q5 10 4 17q0 3 4 3-4 2-6 0z" fill="#eee"/></svg></button>
    <button aria-label="广联达"><svg width="22" height="22"><path d="M20 4q-5 4-7 1-8-2-10 6 0 8 8 8 7-1 6-7-2-4-6-2-3 3 1 5M15 3q-12-2-10 8 2 6 8 5 3-1 2-4" fill="none" stroke="#ddd" stroke-width="1.300"/></svg></button>
  </div>
  <i class="grip"></i>
  <div class="apps">
    <button aria-label="Edge"><svg width="22" height="22"><path d="M1 10Q3 1 11 1t10 11H8q0 5 6 5 3 0 6-2v5q-8 3-13 0-5-5 0-11-4 1-6 1zM8 8h7q0-3-3.500-3T8 8z" fill="#0b7ad8"/></svg></button>
    <button aria-label="Internet Explorer"><svg width="24" height="24"><path d="M20 15q-2 4-7 4t-7-6q1-7 7-7t7 7H8" fill="none" stroke="#4db4f0" stroke-width="3.600"/><path d="M2 22q-1-7 8-14T22 2q2 1 0 5" fill="none" stroke="#f4c830" stroke-width="1.800"/></svg></button>
    <button aria-label="文件资源管理器"><svg width="22" height="20"><path d="M0 1h9l1 2h11v16H0z" fill="#fbdc84"/><path d="M3 19v-8h15v8h-4v-4H7v4z" fill="#44aee0"/></svg></button>
    <button class="live" aria-label="GGJ2013"><svg width="24" height="24"><use href="#i-app"/></svg></button>
    <button class="run" aria-label="便笺"><svg width="24" height="24"><rect width="24" height="24" rx="2" fill="#f09a1c"/><path d="m3 4 13-1 3 16-12 2z" fill="#fff8e4"/><path d="m6 9 8-1m-7 4 8-1m-7 4 7-1" stroke="#a86818"/><path d="M22 2 12 16l-1 3 3-2L24 4z" fill="#b44814"/></svg></button>
    <button class="run" aria-label="广联达G"><svg width="24" height="24"><path d="M23 2q-5 4-10 4-6 0-6 6t5 6q4 0 4-3-3 1-4-1 0-4 4-4 6 1 6 6-2 7-10 7Q1 22 0 12 1 2 12 1q6 2 11 1z" fill="url(#deep)"/></svg></button>
    <button class="run" aria-label="360浏览器"><svg width="24" height="24"><circle cx="12" cy="12" r="10" fill="url(#green)"/><path d="M17 15q-1 3-5 3t-5-6q1-5 5-5t5 5H8" fill="none" stroke="#fff" stroke-width="2.800"/><path d="M2 20Q1 17 4 13M15 3q6-3 7 0" stroke="#2c902c" stroke-width="1.400" fill="none"/></svg></button>
  </div>
  <div class="tray">
    <i class="grip"></i>
    <span class="links">链接</span>
    <span class="cpu">30%<br>CPU使用</span>
    <svg width="14" height="16"><path d="m1 11 6-6 6 6" fill="none" stroke="#fff" stroke-width="1.300"/></svg>
    <svg width="16" height="16"><path d="M5 5.500h9v6H5zM14.500 7v3M2 2v3M5 2v2M0 5h5v3H3v2" fill="none" stroke="#fff"/><path d="M7 7h6v3H7z" fill="#fff"/></svg>
    <svg width="14" height="16"><path d="M1 14Q2 4 13 3M4 14q0-7 9-8M7 14q0-4 6-5" fill="none" stroke="#bbb"/><path d="M10 14q0-2 3-2v2z" fill="#fff"/></svg>
    <svg width="16" height="16"><path d="M1 6h2l4-4v12l-4-4H1z" fill="none" stroke="#fff"/><path d="M9 6q2 2 0 4m2-6q3 4 0 8m2-10q4 6 0 12" fill="none" stroke="#ccc"/></svg>
    <svg width="24" height="16"><path d="M.5 1.500h22v12H.5z" fill="none" stroke="#fff"/><path d="M3 5h18M3 8h18" stroke="#fff" stroke-dasharray="2 1"/><path d="M6 11h11" stroke="#fff"/></svg>
    <span class="ime">中</span>
    <svg width="16" height="16"><use href="#i-sogou"/></svg>
  </div>
  <time class="clock">15:03<br>2018/5/1</time>
  <button class="notice" aria-label="通知"><svg width="26" height="26"><path d="M1 3h16v12H8l-3 3v-3H1z" fill="#fff"/><path d="M4 6.500h10M4 9.500h10M4 12.500h6" stroke="#000"/><circle cx="17" cy="17" r="8" fill="#333" stroke="#666"/></svg><b>1</b></button>
</div>

<div class="ball">72</div>

<div class="imebar">
  <svg class="badge"><use href="#i-sogou"/></svg>
  <b>英</b>
  <svg width="12" height="16"><circle cx="4" cy="5" r="2" fill="#1c74cc"/><path d="M9 8q2 3-1 6" stroke="#1c74cc" stroke-width="2" fill="none"/></svg>
  <svg width="16" height="16"><circle cx="8" cy="8" r="7" fill="none" stroke="#1c74cc" stroke-width="1.600"/><path d="M5.500 5v2M10.500 5v2M4.500 9.500q3.500 4 7 0" fill="none" stroke="#1c74cc" stroke-width="1.500"/></svg>
  <svg width="12" height="16"><rect x="3.500" y="0" width="5" height="10" rx="2.500" fill="#1c74cc"/><path d="M1 6q0 6 5 6t5-6M6 12v3M3 15h6" fill="none" stroke="#1c74cc" stroke-width="1.500"/></svg>
  <svg width="16" height="16"><path d="M1 2.500h14v11H1z" fill="none" stroke="#1c74cc" stroke-width="1.600"/><path d="M3 6h10M3 8.500h10" stroke="#1c74cc" stroke-width="1.500" stroke-dasharray="2 1"/><path d="M4 11.500h8" stroke="#1c74cc"/></svg>
  <svg width="17" height="16"><circle cx="6" cy="4" r="3" fill="#a8b8cc"/><path d="M0 13q0-6 6-5h2v5z" fill="#a8b8cc"/><path d="M7.500 8.500h9v6h-9zM9 10.500h6M9 12.500h6" fill="#fff" stroke="#a8b8cc"/></svg>
  <svg width="16" height="16"><path d="m0 4 5-3q3 2 6 0l5 3-2 3-2-1v9H4V6L2 7z" fill="#1c74cc"/></svg>
  <svg width="16" height="16"><path d="m2 14 7-7" stroke="#1c74cc" stroke-width="3"/><path d="M10 1q-4 3-2 6 3 3 6 1l1-3-3 1-2-2 2-3z" fill="#1c74cc"/></svg>
</div>

<section class="dialog" role="dialog" aria-labelledby="dlg">
  <header><svg class="ic"><use href="#i-app"/></svg><h2 id="dlg">编辑其它钢筋</h2>
    <button aria-label="最小化"><svg width="12" height="12"><path d="M1 6.500h10" stroke="#ccc"/></svg></button>
    <button aria-label="最大化"><svg width="12" height="12"><path d="M1.500 1.500h9v9h-9z" fill="none" stroke="#000"/></svg></button>
    <button aria-label="关闭"><svg width="12" height="12"><path d="m1 1 10 10M11 1 1 11" stroke="#000" stroke-width="1.200"/></svg></button>
  </header>
  <p class="caption">其它钢筋列表:</p>
  <div class="bars">
    <table class="grid rebar">
      <colgroup><col class="r-no"><col class="r-id"><col class="r-id"><col class="r-n"><col class="r-pic"><col class="r-n"><col class="r-len"></colgroup>
      <thead><tr><th></th><th class="hot">筋号</th><th>钢筋信息</th><th>图号</th><th>钢筋图形</th><th>根数</th><th>长度<kbd>(mm)</kbd></th></tr></thead>
      <tbody>
        <tr class="tall"><th class="sel">1</th><td class="focus">1</td><td><svg class="phi"><use href="#i-rebar"/></svg>8</td><td>8</td>
          <td class="pic"><svg viewBox="0 0 205 54" width="205" height="54"><use href="#zig"/><text x="87" y="15" text-anchor="middle">2000</text><text x="67" y="41" text-anchor="middle">100</text></svg></td><td>1</td><td>20115</td></tr>
        <tr class="tall"><th>2</th><td>2</td><td><svg class="phi"><use href="#i-rebar"/></svg>8</td><td>8</td>
          <td class="pic"><svg viewBox="0 0 205 54" width="205" height="54"><use href="#zig"/><text x="87" y="15" text-anchor="middle">15200</text><text x="67" y="41" text-anchor="middle">200</text></svg></td><td>1</td><td>77045</td></tr>
        <tr class="mid"><th>3</th><td>5</td><td><svg class="phi"><use href="#i-rebar"/></svg>16</td><td>18</td>
          <td class="pic"><svg viewBox="0 0 205 38" width="205" height="38"><path d="M33 13v17h167" fill="none" stroke="#000" stroke-width="2"/><text x="9" y="26">300</text><text class="red" x="110" y="21" text-anchor="middle">18000</text></svg></td><td>6</td><td>18300</td></tr>
        <tr class="big"><th>4</th><td>4</td><td><svg class="phi"><use href="#i-rebar"/></svg>12</td><td>356</td>
          <td class="pic"><svg viewBox="0 0 205 63" width="205" height="63"><path d="M71.500 5v53M68 8.500h7M68 54.500h7M69 6l6 5M69 52l6 5" fill="none" stroke="#000"/><circle cx="104" cy="31" r="23.500" fill="none" stroke="#000" stroke-width="2"/><path d="m123 14-5 3q-2 4 2 4M123 47l-4-4q-4 3 0 5" fill="none" stroke="#000" stroke-width="2"/><path d="m120 16 7-6m-4 4q9 8 9 17t-9 18m-3-2 7 6" fill="none" stroke="#000"/><text class="red" x="39" y="36">488</text><text x="144" y="36">160</text></svg></td><td>5</td><td>2078</td></tr>
        <tr><th>5</th><td></td><td></td><td></td><td></td><td></td><td></td></tr>
      </tbody>
    </table>
  </div>
  <footer><button>插入</button><button>删除</button><button class="ok">确定</button><button>取消</button></footer>
</section>
<svg class="defs" aria-hidden="true"><defs><g id="zig">
  <path d="M39.500 14v6M138.500 14v6M39 17.500h100M53.500 42v6M77.500 42v6M53 45.500h25M144.500 22v12M141 22.500h7M141 34.500h7" fill="none" stroke="#000"/>
  <path d="m40 17.500 4-2v4zM138 17.500l-4-2v4zM54 45.500l4-2v4zM77 45.500l-4-2v4zM144.500 23l-2 4h4zM144.500 34l-2-4h4z"/>
  <path d="M39 36V22l15 13 10-11 12 11 12-12 13 12 14-13 10 10 13-10v13" fill="none" stroke="#000" stroke-width="2"/>
  <text x="150" y="30">300</text><text class="cn" x="95" y="49">钢筋分</text><text x="131" y="46">1</text><text class="cn" x="143" y="49">段</text>
</g></defs></svg>
</body>
</html>
```
FILE: styles.css
```css
* { box-sizing: border-box; }
html, body { margin: 0; height: 100%; }
body {
  display: flex; flex-direction: column; min-height: 100vh; overflow: hidden;
  position: relative; background: #f0f0f0; color: #000;
  font: 12px/16px "Open Sans", "Noto Sans CJK SC", sans-serif;
}
h1, h2, p, ul { margin: 0; padding: 0; font-size: 12px; font-weight: normal; }
ul { list-style: none; }
a { color: inherit; text-decoration: none; }
button, select, input { font: inherit; color: inherit; border: 0; padding: 0; margin: 0; background: none; border-radius: 0; }
svg { display: block; flex: none; }
kbd { font: 10px/16px "DejaVu Sans Mono", "Liberation Mono", monospace; }
.defs { position: absolute; width: 0; height: 0; }
.ic { width: 16px; height: 16px; }

.titlebar { display: flex; align-items: center; height: 23px; flex: none; background: #fff; padding-left: 2px; gap: 5px; }
.title { flex: 1; color: #999; white-space: nowrap; overflow: hidden; }
.path { font-size: 13px; }
.winbtns { display: flex; }
.winbtns button { width: 46px; height: 20px; display: grid; place-items: center; }

.menurow { display: flex; height: 29px; flex: none; align-items: stretch; white-space: nowrap; padding-top: 1px; gap: 2px; }
.menu { display: flex; gap: 11px; align-items: center; padding-left: 7px; }
.menu button:nth-child(n+6) { padding-left: 1px; }
.tools { display: flex; align-items: center; gap: 7px; }
.extra { padding-left: 6px; margin-right: 5px; }
.strip { display: flex; align-items: center; gap: 7px; background: linear-gradient(#fdfdfd, #efefef); border-radius: 3px; white-space: nowrap; }
.tip { flex: 0 0 186px; justify-content: center; color: #2d6a00; }
.account { flex: 1; padding-left: 4px; gap: 9px; }
.tb { display: flex; align-items: center; gap: 4px; }
.off { color: #7a7a7a; }
.caret { border: 3px solid transparent; border-top-color: #000; border-bottom: 0; margin-left: 3px; }
.off .caret { border-top-color: #555; }
.tight .caret { margin-left: -2px; margin-right: 1px; }
.sep { width: 1px; height: 22px; background: #b4b4b4; margin-right: -2px; }
.more { width: 9px; height: 8px; margin: 5px 3px 0 auto; align-self: flex-start; }

.toolrow { display: flex; height: 31px; flex: none; gap: 1px; padding: 1px 0 2px; }
.file { flex: 0 0 152px; padding-left: 4px; }
.file .sep { margin-right: 0; }
.draw { flex: 0 0 550px; padding-left: 4px; }
.view { flex: 1; padding-left: 1px; }
.sigma { width: 16px; text-align: center; font: bold 15px/16px "Liberation Serif", serif; }
.combo { display: flex; align-items: center; gap: 4px; width: 62px; height: 22px; padding: 0 3px; border: 1px solid #707070; margin-right: -3px; }
.swatch { width: 14px; height: 10px; background: #e4e4e4; border: 1px solid #bbb; }
select { appearance: none; flex: 1; min-width: 0; height: 20px; }
.combo .caret { margin-left: 0; }

.work { flex: 1; display: flex; gap: 6px; min-height: 0; }
.nav { width: 165px; flex: none; display: flex; flex-direction: column; padding: 1px 0; }
.nav, .parts, .props, .dialog, .status { font-family: "Liberation Sans", "Noto Sans CJK SC", sans-serif; }
.navhead { display: flex; align-items: center; gap: 9px; height: 15px; border: 1px solid #888; padding-right: 5px; margin-bottom: 2px; }
.navhead h2 { flex: 1; line-height: 13px; font-size: 13px; }
.navbtn { height: 22px; flex: none; border: 1px solid #a8a8a8; border-top-color: #fff; border-left-color: #fff; }
.treebox { flex: 1; min-height: 0; display: flex; flex-direction: column; border: 1px solid #999; border-width: 0 1px 0 2px; margin: 1px 0 2px; }
.treetools { display: flex; gap: 7px; height: 26px; align-items: center; padding-left: 5px; background: linear-gradient(#fdfdfd, #ebebeb); border-top: 1px solid #fff; }
.treeview { flex: 1; min-height: 0; display: grid; grid-template: minmax(0, 1fr) 17px / minmax(0, 1fr) 16px; background: #fff; border: 1px solid #828790; border-width: 1px 2px 2px 0; padding-left: 2px; }
.treepane { overflow: hidden; padding-top: 1px; }
.root { display: flex; align-items: center; height: 16px; padding-left: 5px; }
.arw { width: 12px; height: 12px; }
.fold { width: 17px; height: 16px; margin: 0 4px 0 5px; }
.tree ul { position: relative; }
.tree ul::before { content: ""; position: absolute; left: 30px; top: 0; bottom: 8px; border-left: 1px dotted #808080; }
.tree ul::after { content: ""; position: absolute; left: 11px; top: 0; bottom: 0; border-left: 1px dotted #808080; }
.tree .end ul::after { display: none; }
.tree ul li { display: flex; align-items: center; height: 16px; white-space: nowrap; padding-left: 31px; }
.tree ul li::before { content: ""; width: 10px; border-top: 1px dotted #808080; }
.tree ul .ic { margin-right: 4px; }
.current { display: flex; background: #d9d9d9; padding-right: 5px; }
.dock { width: 14px; height: 14px; }
.vbar { display: flex; flex-direction: column; align-items: center; background: #f0f0f0; }
.vbar .thumb { flex: 0 0 54%; width: 15px; background: #cdcdcd; margin-top: auto; }
.vbar svg:last-child { margin: 17px 0 0; }
.hbar { display: flex; align-items: center; background: #f0f0f0; padding-right: 1px; }
.hbar .thumb { flex: 0 0 102px; height: 15px; background: #cdcdcd; margin-right: 6px; }

.stage { flex: 1; min-width: 0; display: flex; flex-direction: column; padding-top: 1px; }
.edit { height: 27px; flex: none; padding-left: 4px; }
.floor { display: flex; align-items: center; gap: 6px; border-left: 1px solid #b4b4b4; padding-left: 2px; }
.drop { display: flex; align-items: center; width: 61px; height: 24px; background: #fff; padding: 0 3px 0 2px; margin-right: -3px; }
.wide { gap: 8px; }
.wide .slim { width: 10px; height: 16px; }
.panes { flex: 1; min-height: 0; display: flex; gap: 4px; }
.parts { width: 184px; flex: none; display: flex; flex-direction: column; border-right: 2px solid #999; background: #fff; margin: 3px 0 1px; }
.search { display: flex; height: 28px; align-items: center; padding: 2px 2px 0 1px; gap: 2px; }
.search input { flex: 1; min-width: 0; height: 24px; border: 1px solid #7a7a7a; padding: 0 2px 3px; }
.search button { width: 20px; display: grid; place-items: center; background: #eaf5ff; }
::placeholder { color: #777; opacity: 1; }
.partlist { flex: 1; border: 1px solid #828790; border-width: 1px 0 2px 1px; padding: 2px 0 0 5px; }
.partroot { display: flex; align-items: center; height: 16px; gap: 5px; }
.partroot .ic { margin-right: 1px; }
.partlist ul { position: relative; padding-left: 26px; }
.partlist ul::before { content: ""; position: absolute; left: 26px; top: 0; bottom: 8px; border-left: 1px dotted #808080; }
.partlist li { display: flex; align-items: center; height: 16px; }
.partlist li::before { content: ""; width: 9px; border-top: 1px dotted #808080; }
.partlist a { display: flex; align-items: center; gap: 6px; height: 16px; padding: 0 5px 0 4px; font: 10px/16px "DejaVu Sans Mono", monospace; }
.partlist a svg { width: 12px; height: 12px; }
.picked { background: #316ac5; }

.props { flex: 1; min-width: 0; display: flex; flex-direction: column; margin: 1px 2px 1px 0; background: #fff; border-bottom: 1px solid #ccc; }
.tabs { display: flex; height: 21px; flex: none; }
.tab { width: 63px; border: 1px solid #d9d9d9; border-width: 1px 1px 0; }
.tabs::after { content: ""; flex: 1; border-bottom: 1px solid #d9d9d9; }
.sheet { flex: 1; min-height: 0; overflow: hidden; margin: 4px 2px 2px 3px; border: 1px solid #999; padding-left: 1px; }
.grid { border-collapse: separate; border-spacing: 0; table-layout: fixed; width: 0; font-size: 12px; line-height: 16px; }
.grid th, .grid td { border: 1px solid #c0c0c0; border-width: 0 1px 1px 0; padding: 0 2px; height: 19px; font-weight: normal; text-align: left; white-space: nowrap; }
.grid th { text-align: center; background: linear-gradient(#fff, #eeeeee); }
.grid thead th { height: 23px; }
.grid tbody th { font-size: 11px; padding-right: 3px; }
.grid .hot { background: linear-gradient(#f8d898, #f0c068); color: #5c0050; }
.attrs td:nth-child(2) { padding-left: 20px; }
.grid .mono { font: 10px/16px "DejaVu Sans Mono", monospace; }
.grid .link { color: #00f; }
.grid .chk { padding: 0; }
.chk input { appearance: none; display: block; width: 13px; height: 13px; border: 1px solid #333; background: #fff; margin: 0 auto; }
.grid .on th, .grid .sel { background: #ffd48c; color: #5c0050; }
.on td:nth-child(2) { background: #0078d7; color: #fff; }
.on td:nth-child(3), .focus { background: #d9eaf8; }
.c-no { width: 21px; } .c-name { width: 191px; } .c-val { width: 126px; } .c-add { width: 31px; }
.r-no { width: 21px; } .r-id { width: 81px; } .r-n { width: 65px; } .r-pic { width: 206px; } .r-len { width: 101px; }

.status { display: flex; height: 22px; flex: none; gap: 2px; padding-top: 2px; }
.status span { border: 1px solid #d4d4d4; border-bottom: 0; padding-left: 1px; background: linear-gradient(#fff, #f0f0f0); line-height: 18px; white-space: nowrap; }
.s1 { width: 148px; } .s2 { width: 78px; } .s3 { width: 98px; } .s4 { width: 48px; font-size: 11px; } .s5 { flex: 1; } .s6 { width: 71px; }

.taskbar { display: flex; height: 40px; flex: none; background: #000c10; color: #fff; }
.taskbar button { display: grid; place-items: center; }
.start { width: 48px; background: #000; }
.cortana { display: flex; align-items: center; width: 344px; background: #333; padding: 0 15px 0 9px; gap: 5px; }
.cortana input { flex: 1; min-width: 0; font-size: 14px; color: #aaa; }
.cortana ::placeholder { color: #9a9a9a; }
.quick { display: flex; }
.quick button { width: 50px; }
.grip { align-self: center; width: 4px; height: 15px; border: 1px solid #444; border-width: 0 1px; }
.quick + .grip { margin: 0 13px 0 8px; }
.apps { display: flex; gap: 1px; }
.apps button { width: 42px; border-bottom: 2px solid transparent; }
.apps .live { background: #3a4346; border-color: #84bcf4; }
.apps .run { background: linear-gradient(#84bcf4, #84bcf4) center 38px / 34px 2px no-repeat; background-origin: border-box; background-clip: border-box; }
.tray { display: flex; flex: 1; justify-content: flex-end; align-items: center; gap: 8px; padding-right: 7px; line-height: 17px; white-space: nowrap; }
.links { margin: 0 11px 0 2px; color: #ddd; }
.cpu { text-align: center; margin-right: 10px; }
.ime { font-size: 13px; margin: 0 5px 0 2px; }
.clock { width: 75px; text-align: center; padding-top: 2px; line-height: 18px; margin-right: -2px; padding-left: 5px; }
.taskbar .notice { position: relative; width: 57px; background: #000; }
.notice b { position: absolute; left: 31px; top: 16px; font-size: 11px; }

.ball { position: absolute; left: 963px; top: -29px; width: 47px; height: 47px; border-radius: 50%; border: 2px solid #2f7c40; background: #4cc860; box-shadow: inset 0 0 0 1px #b8f0c0, 0 1px 6px 2px #bbb; color: #fff; font: bold 11px/16px "DejaVu Sans", sans-serif; text-align: center; padding-top: 26px; }
.imebar { position: absolute; left: 715px; top: 3px; width: 193px; height: 24px; display: flex; align-items: center; gap: 7px; background: #fff; border: 1px solid #b8c8dc; padding-left: 18px; color: #1c74cc; font-size: 14px; }
.imebar .badge { position: absolute; left: -14px; top: -5px; width: 28px; height: 28px; }

.dialog { position: absolute; left: 367px; top: 277px; width: 738px; display: flex; flex-direction: column; background: #f0f0f0; border: 1px solid #2b8ce8; box-shadow: 0 4px 16px rgba(0, 0, 0, .35); }
.dialog header { display: flex; align-items: center; height: 30px; background: #fff; padding: 0 1px 0 8px; }
.dialog h2 { flex: 1; padding-left: 5px; }
.dialog header button { width: 45px; height: 30px; display: grid; place-items: center; }
.caption { padding: 7px 8px 4px; }
.bars { margin: 0 1px; border: 1px solid #a8a8a8; border-bottom: 0; background: #fff; height: 305px; }
.rebar thead th { height: 20px; }
.rebar td { font-size: 11px; }
.rebar .tall td { height: 55px; } .rebar .mid td { height: 39px; } .rebar .big td { height: 64px; }
.rebar .pic { padding: 0; }
.phi { display: inline-block; width: 10px; height: 12px; vertical-align: -2px; margin-left: 2px; }
.rebar text, #zig text { font: 11px "Liberation Sans", sans-serif; }
#zig .cn { font: 12px "Noto Sans CJK SC", sans-serif; }
.red { fill: #f00; }
.dialog footer { display: flex; gap: 14px; padding: 3px 12px 8px 17px; }
.dialog footer button { width: 73px; height: 23px; background: #e1e1e1; border: 1px solid #adadad; }
.dialog footer button:nth-child(2) { margin-left: 9px; }
.dialog footer .ok { margin-left: auto; border: 2px solid #0078d7; }
```
